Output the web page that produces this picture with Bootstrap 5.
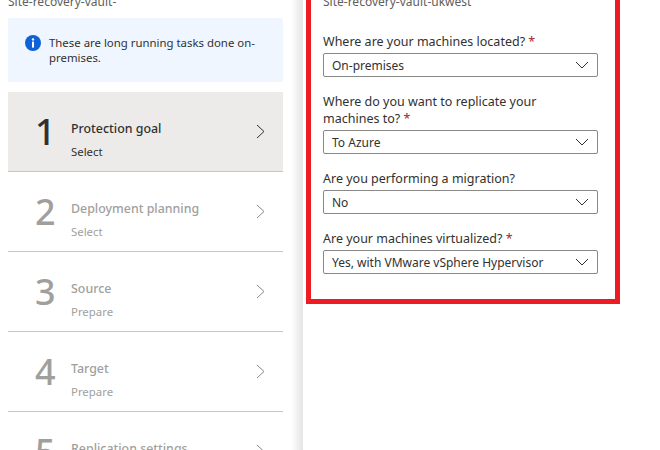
<!DOCTYPE html>
<html lang="en">
<head>
  <meta charset="UTF-8">
  <meta name="viewport" content="width=device-width, initial-scale=1.0">
  <title>Site recovery</title>
  <link href="https://cdn.jsdelivr.net/npm/bootstrap@5.3.0/dist/css/bootstrap.min.css" rel="stylesheet">
  <style>
    html, body { height: 450px; overflow: hidden; background: #fff; }
    body { font-family: "Noto Sans", "Open Sans", sans-serif; font-size: 11.4px; color: #323130; }
    .page-wrap { height: 450px; overflow: hidden; }
    .left-blade { width: 303px; flex: none; padding: 0 20px 0 8px; height: 450px; overflow: hidden; background: linear-gradient(to right, #fff 291px, #e4e4e4 303px); }
    .vault-name { margin: -6px 0 0; height: 24px; line-height: 16px; color: #605e5c; font-size: 12px; }
    .info-box { height: 64px; background: #eff6ff; border-radius: 2px; padding: 17px 17px 0; gap: 8px; line-height: 15px; margin-bottom: 10px; }
    .info-box svg { flex: none; }
    .step-row { height: 80px; border-bottom: 1px solid #c8c6c4; color: #a19f9d; padding-left: 27px; }
    .step-row.is-active { background: #edebe9; color: #323130; }
    .step-num { width: 36px; flex: none; font-size: 36px; font-weight: 500; line-height: 1; }
    .step-text { margin-top: 17px; }
    .step-title { font-size: 12.4px; font-weight: 500; line-height: 16px; margin-bottom: 7px; }
    .step-sub { font-size: 11.4px; line-height: 16px; }
    .step-chev { margin-right: 18px; }
    .form-frame { width: 314px; height: 304px; margin: 0 0 0 3px; border: 5px solid #ed1c24; border-top: 0; padding: 0 17px 0 12px; }
    .sub-name { margin: -6px 0 0; height: 39px; line-height: 16px; color: #605e5c; font-size: 12px; }
    .field-label { margin: 0 0 3px; line-height: 17px; font-size: 12.5px; color: #323130; }
    .req { color: #a4262c; }
    .form-select.az-select { height: 24px; min-height: 24px; padding: 2px 26px 0 8px; font-size: 12px; line-height: 20px; border: 1px solid #8a8886; border-radius: 2px; color: #323130;
      background-image: url("data:image/svg+xml,%3Csvg xmlns='http://www.w3.org/2000/svg' width='14' height='8' viewBox='0 0 14 8'%3E%3Cpath d='M1 1l6 6 6-6' fill='none' stroke='%23323130' stroke-width='1'/%3E%3C/svg%3E");
      background-position: right 8px center; background-size: 14px 8px; margin-bottom: 16px; }
  </style>
</head>
<body>
  <div class="page-wrap d-flex">
    <div class="left-blade">
      <p class="vault-name">Site-recovery-vault-</p>
      <div class="info-box d-flex">
        <svg width="16" height="16" viewBox="0 0 16 16"><circle cx="8" cy="8" r="8" fill="#0f62d6"/><circle cx="8" cy="4.4" r="1.2" fill="#fff"/><rect x="7" y="6.6" width="2" height="6" fill="#fff"/></svg>
        <div>These are long running tasks done on-premises.</div>
      </div>
      <div class="step-row is-active d-flex align-items-center">
        <div class="step-num">1</div>
        <div class="step-text flex-grow-1"><div class="step-title">Protection goal</div><div class="step-sub">Select</div></div>
        <svg class="step-chev" width="9" height="15" viewBox="0 0 9 15"><path d="M1 1l7 6.5-7 6.5" fill="none" stroke="#323130"/></svg>
      </div>
      <div class="step-row d-flex align-items-center">
        <div class="step-num">2</div>
        <div class="step-text flex-grow-1"><div class="step-title">Deployment planning</div><div class="step-sub">Select</div></div>
        <svg class="step-chev" width="9" height="15" viewBox="0 0 9 15"><path d="M1 1l7 6.5-7 6.5" fill="none" stroke="#8a8886"/></svg>
      </div>
      <div class="step-row d-flex align-items-center">
        <div class="step-num">3</div>
        <div class="step-text flex-grow-1"><div class="step-title">Source</div><div class="step-sub">Prepare</div></div>
        <svg class="step-chev" width="9" height="15" viewBox="0 0 9 15"><path d="M1 1l7 6.5-7 6.5" fill="none" stroke="#8a8886"/></svg>
      </div>
      <div class="step-row d-flex align-items-center">
        <div class="step-num">4</div>
        <div class="step-text flex-grow-1"><div class="step-title">Target</div><div class="step-sub">Prepare</div></div>
        <svg class="step-chev" width="9" height="15" viewBox="0 0 9 15"><path d="M1 1l7 6.5-7 6.5" fill="none" stroke="#8a8886"/></svg>
      </div>
      <div class="step-row d-flex align-items-center">
        <div class="step-num">5</div>
        <div class="step-text flex-grow-1"><div class="step-title">Replication settings</div><div class="step-sub">Prepare</div></div>
        <svg class="step-chev" width="9" height="15" viewBox="0 0 9 15"><path d="M1 1l7 6.5-7 6.5" fill="none" stroke="#8a8886"/></svg>
      </div>
    </div>
    <div class="form-frame">
      <p class="sub-name">Site-recovery-vault-ukwest</p>
      <p class="field-label">Where are your machines located? <span class="req">*</span></p>
      <select class="form-select az-select"><option>On-premises</option></select>
      <p class="field-label">Where do you want to replicate your<br>machines to? <span class="req">*</span></p>
      <select class="form-select az-select"><option>To Azure</option></select>
      <p class="field-label">Are you performing a migration?</p>
      <select class="form-select az-select"><option>No</option></select>
      <p class="field-label">Are your machines virtualized? <span class="req">*</span></p>
      <select class="form-select az-select"><option>Yes, with VMware vSphere Hypervisor</option></select>
    </div>
  </div>
  <script src="https://cdn.jsdelivr.net/npm/bootstrap@5.3.0/dist/js/bootstrap.bundle.min.js"></script>
</body>
</html>
